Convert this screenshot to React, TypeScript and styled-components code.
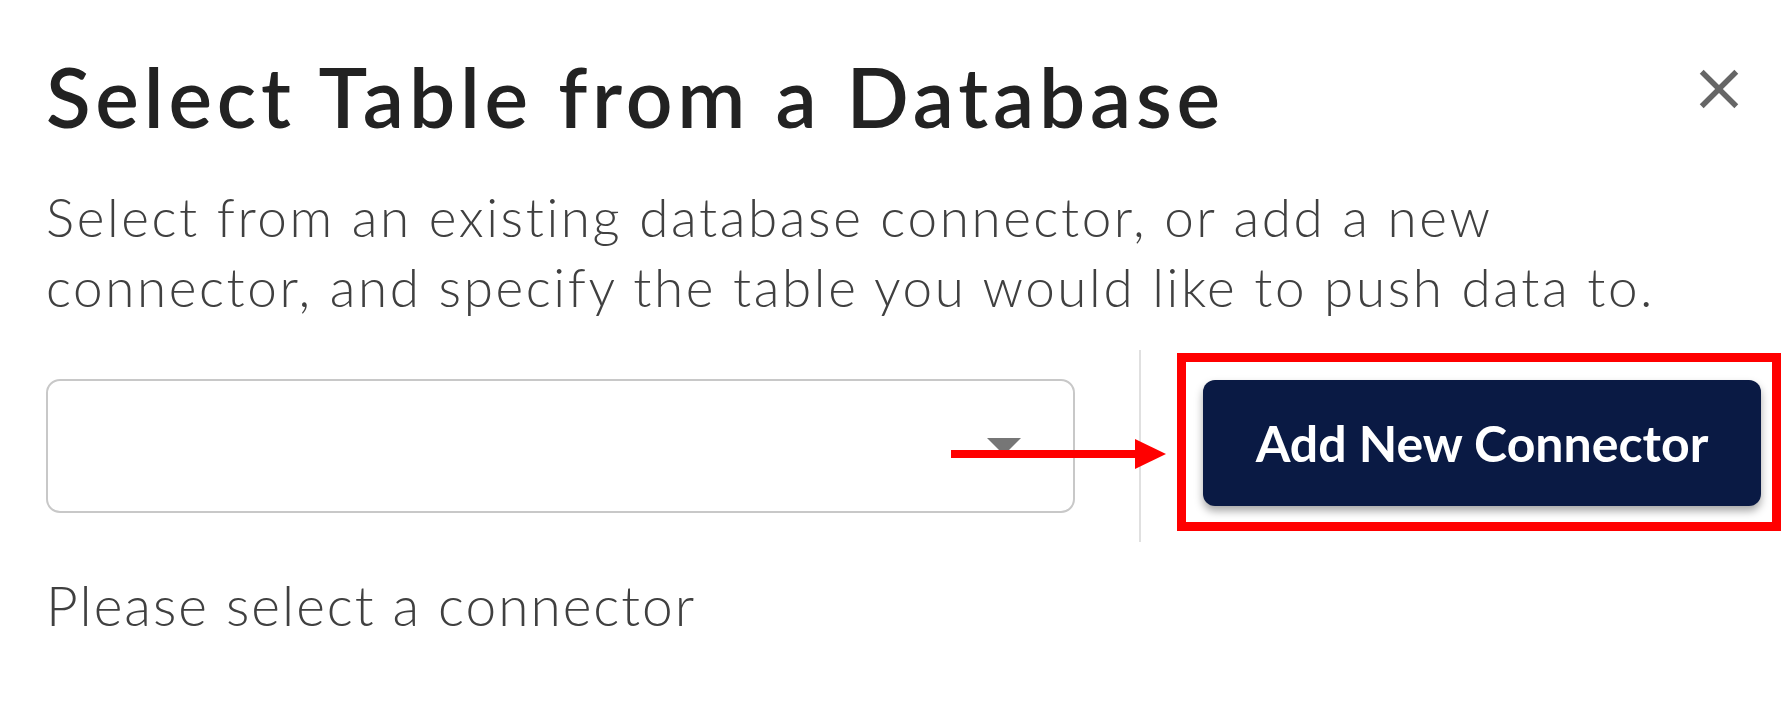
import styled, { createGlobalStyle } from "styled-components";

const GlobalStyle = createGlobalStyle`
  html, body {
    margin: 0;
    padding: 0;
    background: #ffffff;
  }
  body {
    font-family: Lato, "Open Sans", sans-serif;
  }
`;

const Dialog = styled.div`
  position: relative;
  width: 1784px;
  height: 710px;
  padding: 0 0 0 46px;
  box-sizing: border-box;
  overflow: hidden;
  background: #ffffff;
`;

const TitleRow = styled.div`
  display: flex;
  justify-content: space-between;
  align-items: flex-start;
  padding-top: 36px;
`;

const Title = styled.h2`
  margin: 0;
  font-size: 82px;
  line-height: 120px;
  font-weight: 600;
  color: #222222;
  letter-spacing: 4.8px;
`;

const CloseButton = styled.button`
  display: flex;
  align-items: center;
  justify-content: center;
  width: 66px;
  height: 66px;
  margin: 20px 32px 0 0;
  padding: 0;
  border: none;
  background: transparent;
  cursor: pointer;
`;

const Description = styled.p`
  margin: 26px 0 0;
  max-width: 1680px;
  font-size: 53px;
  line-height: 70px;
  font-weight: 300;
  letter-spacing: 2.6px;
  color: #404040;
`;

const ConnectorRow = styled.div`
  position: relative;
  display: flex;
  align-items: center;
  height: 192px;
  margin-top: 28px;
`;

const SelectBox = styled.div`
  position: relative;
  display: flex;
  align-items: center;
  justify-content: flex-end;
  width: 1029px;
  height: 134px;
  padding-right: 52px;
  box-sizing: border-box;
  border: 2px solid #c8c8c8;
  border-radius: 14px;
`;

const Divider = styled.div`
  align-self: stretch;
  width: 2px;
  margin: 0 36px 0 64px;
  background: #e0e0e0;
`;

const Highlight = styled.div`
  display: flex;
  margin-bottom: 9px;
  padding: 18px 11px 16px 17px;
  border: 9px solid #ff0000;
`;

const PrimaryButton = styled.button`
  width: 558px;
  height: 126px;
  border: none;
  border-radius: 12px;
  background: #0a1a44;
  color: #ffffff;
  font-family: Lato, "Open Sans", sans-serif;
  font-size: 50px;
  font-weight: 700;
  box-shadow: 0 5px 8px rgba(0, 0, 0, 0.35);
  cursor: pointer;
`;

const Arrow = styled.svg`
  position: absolute;
  left: 905px;
  top: 88px;
`;

const Helper = styled.p`
  margin: 28px 0 0;
  font-size: 55px;
  line-height: 70px;
  font-weight: 300;
  letter-spacing: 2px;
  color: #404040;
`;

const App = () => {
  return (
    <>
      <GlobalStyle />
      <Dialog>
        <TitleRow>
          <Title>Select Table from a Database</Title>
          <CloseButton aria-label="close">
            <svg width="66" height="66" viewBox="0 0 24 24">
              <path
                fill="#666666"
                d="M19 6.41 17.59 5 12 10.59 6.41 5 5 6.41 10.59 12 5 17.59 6.41 19 12 13.41 17.59 19 19 17.59 13.41 12z"
              />
            </svg>
          </CloseButton>
        </TitleRow>

        <Description>
          Select from an existing database connector, or add a new connector,
          and specify the table you would like to push data to.
        </Description>

        <ConnectorRow>
          <SelectBox>
            <svg width="34" height="17" viewBox="0 0 34 17">
              <polygon points="0,0 34,0 17,17" fill="#767676" />
            </svg>
          </SelectBox>
          <Divider />
          <Highlight>
            <PrimaryButton>Add New Connector</PrimaryButton>
          </Highlight>
          {/* annotation arrow pointing at the button */}
          <Arrow width="215" height="32" viewBox="0 0 215 32">
            <rect x="0" y="12" width="186" height="8" fill="#ff0000" />
            <polygon points="184,1 215,16 184,31" fill="#ff0000" />
          </Arrow>
        </ConnectorRow>

        <Helper>Please select a connector</Helper>
      </Dialog>
    </>
  );
};

export default App;
